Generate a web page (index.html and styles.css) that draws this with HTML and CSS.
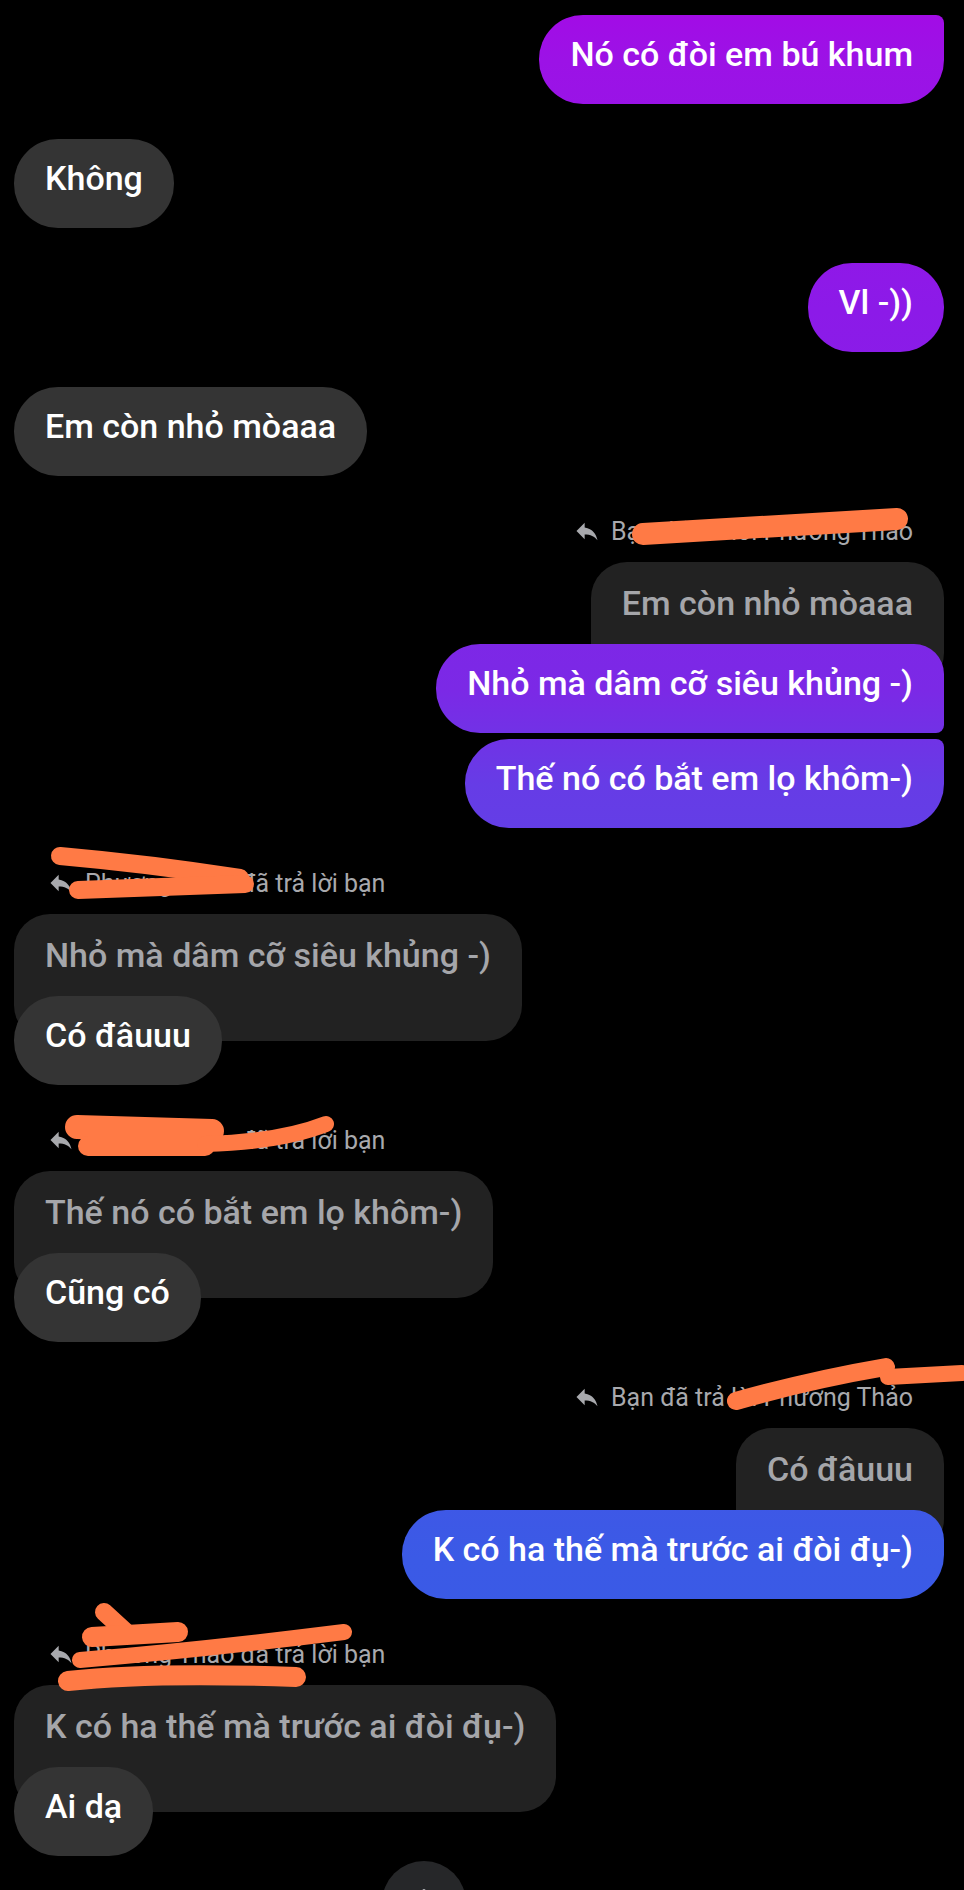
FILE: index.html
```html
<!DOCTYPE html>
<html lang="vi">
<head>
<meta charset="utf-8">
<title>Chat</title>
<link rel="stylesheet" href="styles.css">
</head>
<body>
<div class="chat">
  <div class="msg out first">
    <div class="bubble sent tr-small">Nó có đòi em bú khum</div>
  </div>
  <div class="msg in">
    <div class="bubble recv">Không</div>
  </div>
  <div class="msg out">
    <div class="bubble sent">Vl -))</div>
  </div>
  <div class="msg in">
    <div class="bubble recv">Em còn nhỏ mòaaa</div>
  </div>

  <div class="group out">
    <div class="reply-label">
      <svg class="reply-icon" viewBox="0 0 24 24"><path d="M10 9V5l-7 7 7 7v-4.1c5 0 8.5 1.6 11 5.1-1-5-4-10-11-11z"/></svg>
      <span>Bạn đã trả lời Phương Thảo</span>
    </div>
    <div class="quote">Em còn nhỏ mòaaa</div>
    <div class="bubble sent on-quote tr-mid br-small">Nhỏ mà dâm cỡ siêu khủng -)</div>
    <div class="bubble sent next tr-small">Thế nó có bắt em lọ khôm-)</div>
  </div>

  <div class="group in">
    <div class="reply-label">
      <svg class="reply-icon" viewBox="0 0 24 24"><path d="M10 9V5l-7 7 7 7v-4.1c5 0 8.5 1.6 11 5.1-1-5-4-10-11-11z"/></svg>
      <span>Phương Thảo đã trả lời bạn</span>
    </div>
    <div class="quote">Nhỏ mà dâm cỡ siêu khủng -)</div>
    <div class="bubble recv on-quote">Có đâuuu</div>
  </div>

  <div class="group in">
    <div class="reply-label">
      <svg class="reply-icon" viewBox="0 0 24 24"><path d="M10 9V5l-7 7 7 7v-4.1c5 0 8.5 1.6 11 5.1-1-5-4-10-11-11z"/></svg>
      <span>Phương Thảo đã trả lời bạn</span>
    </div>
    <div class="quote">Thế nó có bắt em lọ khôm-)</div>
    <div class="bubble recv on-quote">Cũng có</div>
  </div>

  <div class="group out">
    <div class="reply-label">
      <svg class="reply-icon" viewBox="0 0 24 24"><path d="M10 9V5l-7 7 7 7v-4.1c5 0 8.5 1.6 11 5.1-1-5-4-10-11-11z"/></svg>
      <span>Bạn đã trả lời Phương Thảo</span>
    </div>
    <div class="quote">Có đâuuu</div>
    <div class="bubble sent on-quote tr-mid">K có ha thế mà trước ai đòi đụ-)</div>
  </div>

  <div class="group in">
    <div class="reply-label">
      <svg class="reply-icon" viewBox="0 0 24 24"><path d="M10 9V5l-7 7 7 7v-4.1c5 0 8.5 1.6 11 5.1-1-5-4-10-11-11z"/></svg>
      <span>Phương Thảo đã trả lời bạn</span>
    </div>
    <div class="quote">K có ha thế mà trước ai đòi đụ-)</div>
    <div class="bubble recv on-quote">Ai dạ</div>
  </div>
</div>

<button class="scroll-down" aria-label="Cuộn xuống">
  <svg viewBox="0 0 24 24"><path d="M12 4v14M5 12l7 7 7-7"/></svg>
</button>

<svg class="scribbles" viewBox="0 0 964 1890" aria-hidden="true">
  <g>
    <path class="s22" d="M643 534 Q 770 527 897 519"/>
    <path class="s18" d="M60 856 Q 150 864 240 878"/>
    <path class="s18" d="M78 890 L245 884"/>
    <path class="s24" d="M77 1127 L212 1131"/>
    <path class="s20" d="M88 1146 L205 1146"/>
    <path class="s16" d="M205 1144 Q 280 1142 326 1124"/>
    <path class="s18" d="M736 1401 Q 810 1380 886 1367"/>
    <path class="s16" d="M888 1377 L962 1373"/>
    <path class="s18" d="M104 1612 L128 1634"/>
    <path class="s20" d="M92 1637 L178 1632"/>
    <path class="s16" d="M80 1660 Q 200 1650 344 1632"/>
    <path class="s20" d="M68 1681 Q 150 1672 296 1677"/>
  </g>
</svg>
</body>
</html>
```

FILE: styles.css
```css
* { box-sizing: border-box; }

html, body {
  margin: 0;
  padding: 0;
  background: #000;
}

body {
  width: 964px;
  height: 1890px;
  overflow: hidden;
  position: relative;
  font-family: Roboto, "Noto Sans", "Liberation Sans", sans-serif;
}

.chat {
  display: flex;
  flex-direction: column;
  padding: 15px 20px 0 14px;
}

.msg {
  display: flex;
  margin-top: 35px;
}
.msg.first { margin-top: 0; }
.msg.out { justify-content: flex-end; }
.msg.in { justify-content: flex-start; }

.group {
  display: flex;
  flex-direction: column;
}
.group.out { align-items: flex-end; }
.group.in { align-items: flex-start; }

.bubble {
  font-size: 34px;
  line-height: 40px;
  font-weight: 500;
  padding: 19px 31px 30px;
  border-radius: 44px;
  color: #fff;
  white-space: nowrap;
  position: relative;
}

.sent {
  background: linear-gradient(to bottom,
    #a40ae6 0px,
    #9c12e6 60px,
    #8c1ae8 310px,
    #7b29e6 690px,
    #663ce6 785px,
    #3b5ae6 1560px,
    #3559e6 1890px) fixed;
}

.recv { background: #343434; }

.tr-small { border-top-right-radius: 8px; }
.tr-mid { border-top-right-radius: 30px; }
.br-small { border-bottom-right-radius: 8px; }

.next { margin-top: 6px; }

.reply-label {
  display: flex;
  align-items: center;
  gap: 10px;
  height: 38px;
  margin-top: 36px;
  font-size: 25px;
  color: #a8a9ad;
  white-space: nowrap;
}
.group.out .reply-label { padding-right: 31px; }
.group.in .reply-label { padding-left: 33px; }

.reply-icon {
  width: 28px;
  height: 28px;
  fill: #a8a9ad;
}

.quote {
  margin-top: 12px;
  background: #222222;
  color: #a5a6aa;
  font-size: 34px;
  line-height: 40px;
  font-weight: 500;
  padding: 21px 31px 66px;
  border-radius: 36px;
  white-space: nowrap;
}

.on-quote { margin-top: -45px; }

.scroll-down {
  position: absolute;
  left: 382px;
  top: 1861px;
  width: 84px;
  height: 84px;
  border: 0;
  padding: 0;
  border-radius: 50%;
  background: #262729;
  display: flex;
  align-items: center;
  justify-content: center;
}
.scroll-down svg {
  width: 36px;
  height: 36px;
  fill: none;
  stroke: #e4e6eb;
  stroke-width: 2.4;
  stroke-linecap: round;
  stroke-linejoin: round;
}

.scribbles {
  position: absolute;
  left: 0;
  top: 0;
  width: 964px;
  height: 1890px;
  pointer-events: none;
}
.scribbles path {
  fill: none;
  stroke: #ff7a45;
  stroke-linecap: round;
  stroke-linejoin: round;
}
.s16 { stroke-width: 16; }
.s18 { stroke-width: 18; }
.s20 { stroke-width: 20; }
.s22 { stroke-width: 22; }
.s24 { stroke-width: 24; }
```
